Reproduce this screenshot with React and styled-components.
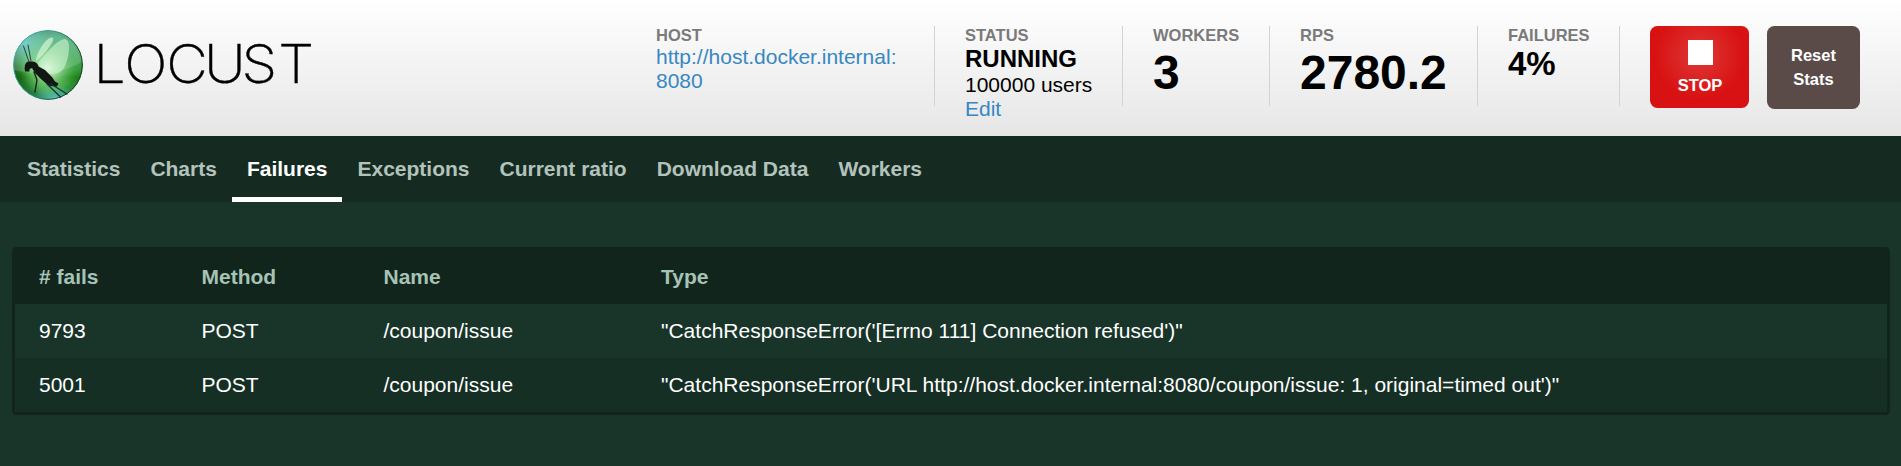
import React from 'react';
import styled, { createGlobalStyle, css } from 'styled-components';

const GlobalStyle = createGlobalStyle`
  * { box-sizing: border-box; }
  body {
    margin: 0;
    min-height: 100vh;
    background: #19352a;
    font-family: "Liberation Sans", Arial, Helvetica, sans-serif;
    font-size: 21px;
    line-height: 24px;
    color: #fff;
  }
`;

const Header = styled.header`
  display: flex;
  align-items: flex-start;
  justify-content: space-between;
  height: 136px;
  padding: 26px 41px 0 12px;
  background: linear-gradient(to bottom, #ffffff, #e6e6e6);
`;

const LogoSvg = styled.svg`
  display: block;
  flex: none;
  width: 304px;
  height: 74px;
  margin-top: 2px;
`;

const Wordmark = styled.text`
  font-family: Inter, "Liberation Sans", sans-serif;
  font-weight: 200;
  font-size: 53px;
  fill: #000;
  stroke: #000;
  stroke-width: 0.4px;
`;

const Boxes = styled.div`
  display: flex;
  align-items: flex-start;
`;

const StatBox = styled.div`
  width: ${(p) => p.$width}px;
  height: 80px;
  border-right: 1px solid #d3d3d3;
  padding-left: 30px;
  color: #000;
  white-space: nowrap;
`;

const Label = styled.div`
  height: 19px;
  font-size: 16.5px;
  line-height: 19px;
  font-weight: 700;
  color: #7a7a7a;
`;

const sizes = {
  small: css`font-size: 24px; line-height: 28px;`,
  medium: css`font-size: 33px; line-height: 38px;`,
  large: css`font-size: 48px; line-height: 55px;`,
};

const Value = styled.div`
  font-weight: 700;
  ${(p) => sizes[p.$size]}
`;

const Link = styled.a`
  display: block;
  color: #3788c2;
  text-decoration: none;
`;

const Button = styled.button`
  display: flex;
  flex-direction: column;
  align-items: center;
  border: 0;
  border-radius: 7.5px;
  font-family: inherit;
  font-size: 16.5px;
  font-weight: 700;
  line-height: 24px;
  color: #fff;
  cursor: pointer;
`;

const StopButton = styled(Button)`
  width: 99px;
  height: 82px;
  margin-left: 30px;
  padding: 14px 0 0 1px;
  background: radial-gradient(circle 44px at 50% 29px, #df3838, #d81212);
`;

const StopSquare = styled.span`
  width: 25px;
  height: 25px;
  margin-bottom: 8px;
  background: #fff;
`;

const ResetButton = styled(Button)`
  width: 93px;
  height: 83px;
  margin-left: 18px;
  padding: 17px 20px 0;
  background: #5a4b49;
`;

const Nav = styled.nav`
  display: flex;
  height: 66px;
  padding-left: 12px;
  background: #152b22;
`;

const Tab = styled.a`
  padding: 21px 15px 0;
  border-bottom: 5px solid ${(p) => (p.$active ? '#fff' : 'transparent')};
  color: ${(p) => (p.$active ? '#fff' : '#b3c3bc')};
  font-weight: 700;
  text-decoration: none;
  white-space: nowrap;
`;

const Main = styled.main`
  padding: 45px 11px 0 12px;
`;

const Table = styled.div`
  border: 3px solid #12251d;
  border-radius: 4.5px;
`;

const Row = styled.div`
  display: grid;
  grid-template-columns: 162.5px 182px 277.5px 1fr;
  align-items: center;
  height: 54px;
  padding-left: 24px;
  white-space: nowrap;
  background: ${(p) => (p.$shaded ? '#162f25' : 'transparent')};
`;

const HeadRow = styled(Row)`
  background: #12251d;
  color: #a6c3b5;
  font-weight: 700;
`;

function Logo() {
  return (
    <LogoSvg viewBox="12 28 304 74" role="img" aria-label="Locust">
      <defs>
        <linearGradient id="ball" x1="0" y1="0" x2="0" y2="1">
          <stop offset="0" stopColor="#4fae93" />
          <stop offset="0.3" stopColor="#4aa863" />
          <stop offset="0.56" stopColor="#3b9f41" />
          <stop offset="0.68" stopColor="#23891c" />
          <stop offset="0.85" stopColor="#3aa749" />
          <stop offset="1" stopColor="#3aae7d" />
        </linearGradient>
        <radialGradient id="edge" cx="0.57" cy="0.47" r="0.6">
          <stop offset="0.6" stopColor="#083a12" stopOpacity="0" />
          <stop offset="1" stopColor="#06330f" stopOpacity="0.6" />
        </radialGradient>
        <radialGradient id="glow" cx="0.5" cy="0.5" r="0.5">
          <stop offset="0" stopColor="#f4fff4" stopOpacity="1" />
          <stop offset="0.4" stopColor="#b5edb5" stopOpacity="0.7" />
          <stop offset="1" stopColor="#80d480" stopOpacity="0" />
        </radialGradient>
        <radialGradient id="cyan" cx="0.5" cy="0.5" r="0.5">
          <stop offset="0" stopColor="#72d7de" stopOpacity="0.9" />
          <stop offset="1" stopColor="#72d7de" stopOpacity="0" />
        </radialGradient>
        <linearGradient id="rim" x1="0" y1="0" x2="1" y2="0.4">
          <stop offset="0" stopColor="#4db5c0" />
          <stop offset="0.55" stopColor="#2e9681" />
          <stop offset="1" stopColor="#103f20" />
        </linearGradient>
        <clipPath id="disc"><circle cx="48" cy="65" r="34.6" /></clipPath>
      </defs>
      <g clipPath="url(#disc)">
        <circle cx="48" cy="65" r="35" fill="url(#ball)" />
        <circle cx="48" cy="65" r="35" fill="url(#edge)" />
        <ellipse cx="25" cy="43" rx="24" ry="25" fill="url(#cyan)" opacity="0.85" />
        <ellipse cx="55" cy="98" rx="22" ry="12" fill="url(#cyan)" opacity="0.75" />
        <path d="M12 28H84V61C74 66 66 70 54 72C39 75 24 73 12 69Z" fill="#d7ffe6" opacity="0.18" />
        <circle cx="48" cy="68" r="28" fill="url(#glow)" />
        <path d="M36 61C37 52 45 39 51 37.5C55 37 53 42 50 46C46 52 40 58 36 61Z" fill="#d5f5d8" opacity="0.7" />
        <path d="M38 63C45 54 56 41 64 39C71 38.5 70 54 65 66C60 76 49 76 43 70Z" fill="#cbf2ce" opacity="0.62" />
      </g>
      <circle cx="48" cy="65" r="34.4" fill="none" stroke="url(#rim)" strokeWidth="1" />
      <path d="M25 71.5C24 65 25.5 62 29 61.5C34 61 37.5 62 38.5 66.5L45 70L52 77L55 81.5L58.5 83.5L57 86.5L49 86L41 79L35 73L32 68L29.5 69V71.5Z" fill="#121713" />
      <g fill="none" stroke="#18201c" strokeLinecap="round">
        <path d="M29 62L23.5 46M31 61L28 45" strokeWidth="0.8" />
        <path d="M34 72L37 80L35 92" strokeWidth="1.4" />
        <path d="M47 84L60.5 97M51 84L67 94" strokeWidth="1.3" stroke="#173040" />
      </g>
      <Wordmark transform="scale(1.08 1)" x="86.5 115 154 188.9 223.6 257.6" y="83.5">LOCUST</Wordmark>
    </LogoSvg>
  );
}

const tabs = ['Statistics', 'Charts', 'Failures', 'Exceptions', 'Current ratio', 'Download Data', 'Workers'];

const failures = [
  ['9793', 'POST', '/coupon/issue', `"CatchResponseError('[Errno 111] Connection refused')"`],
  ['5001', 'POST', '/coupon/issue', `"CatchResponseError('URL http://host.docker.internal:8080/coupon/issue: 1, original=timed out')"`],
];

export default function App() {
  return (
    <>
      <GlobalStyle />
      <Header>
        <Logo />
        <Boxes>
          <StatBox $width={309}>
            <Label>HOST</Label>
            <Link>http://host.docker.internal:<br />8080</Link>
          </StatBox>
          <StatBox $width={188}>
            <Label>STATUS</Label>
            <Value $size="small">RUNNING</Value>
            <div>100000 users</div>
            <Link>Edit</Link>
          </StatBox>
          <StatBox $width={147}>
            <Label>WORKERS</Label>
            <Value $size="large">3</Value>
          </StatBox>
          <StatBox $width={208}>
            <Label>RPS</Label>
            <Value $size="large">2780.2</Value>
          </StatBox>
          <StatBox $width={142}>
            <Label>FAILURES</Label>
            <Value $size="medium">4%</Value>
          </StatBox>
          <StopButton><StopSquare />STOP</StopButton>
          <ResetButton>Reset Stats</ResetButton>
        </Boxes>
      </Header>
      <Nav>
        {tabs.map((t) => <Tab key={t} $active={t === 'Failures'}>{t}</Tab>)}
      </Nav>
      <Main>
        <Table>
          <HeadRow>
            <span># fails</span><span>Method</span><span>Name</span><span>Type</span>
          </HeadRow>
          {failures.map((cells, i) => (
            <Row key={cells[0]} $shaded={i % 2 === 1}>
              {cells.map((c, j) => <span key={j}>{c}</span>)}
            </Row>
          ))}
        </Table>
      </Main>
    </>
  );
}
